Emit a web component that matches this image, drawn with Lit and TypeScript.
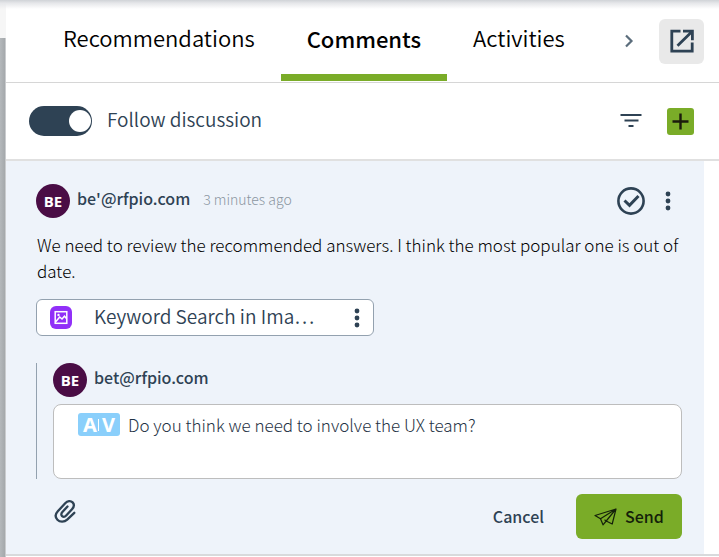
import { LitElement, html, css } from "lit";
import { customElement, property, state } from "lit/decorators.js";
import { classMap } from "lit/directives/class-map.js";

@customElement("user-avatar")
class UserAvatar extends LitElement {
  @property() initials = "";

  static styles = css`
    :host {
      display: flex;
      align-items: center;
      justify-content: center;
      flex: none;
      width: 34px;
      height: 34px;
      border-radius: 50%;
      background: #4a0d45;
      color: #fff;
      font: 700 15px/20px "Open Sans", "Noto Sans", sans-serif;
    }
  `;

  render() {
    return html`${this.initials}`;
  }
}

@customElement("app-root")
class AppRoot extends LitElement {
  @state() private active = "Comments";
  @state() private following = true;

  static styles = css`
    :host {
      --light: 300;
      --book: 350;
      display: flex;
      min-height: 100vh;
      position: relative;
      overflow: hidden;
      background: #fff;
      color: #2e4254;
      font-family: "Noto Sans CJK SC", "Noto Sans", sans-serif;
      font-size: 16px;
      line-height: 26px;
    }
    * {
      box-sizing: border-box;
    }
    button {
      display: flex;
      align-items: center;
      justify-content: center;
      padding: 0;
      border: 0;
      background: none;
      color: inherit;
      font: inherit;
      cursor: pointer;
    }
    svg {
      display: block;
      flex: none;
    }
    .top-shadow {
      position: absolute;
      inset: 0 0 auto 0;
      height: 9px;
      background: linear-gradient(#d0d3d7, #e6e7ea 35%, rgba(255, 255, 255, 0));
    }
    .gutter {
      flex: none;
      width: 6px;
      padding-top: 38px;
      background: #f6f6f6;
      display: flex;
    }
    .gutter::before {
      content: "";
      flex: 1;
      background: linear-gradient(90deg, #b4b8bb, #a6aaad 75%, #dcdddf);
    }
    .panel {
      flex: 1;
      min-width: 0;
    }
    .tabs {
      display: flex;
      align-items: center;
      height: 83px;
      padding: 0 15px 0 31px;
      border-bottom: 1px solid #d6d6d6;
    }
    .tab {
      height: 82px;
      padding: 0 26px 8px;
      color: #000;
      font-size: 22px;
      font-weight: var(--book);
      line-height: 30px;
      white-space: nowrap;
    }
    .tab.active {
      height: 80px;
      padding: 0 26px;
      border-bottom: 7px solid #7aac28;
      font-weight: 500;
    }
    .next {
      margin-left: auto;
      width: 24px;
      height: 30px;
      margin-right: 18px;
    }
    .popout {
      width: 45px;
      height: 45px;
      border-radius: 6px;
      background: #e9e9e9;
      flex: none;
    }
    .toolbar {
      display: flex;
      align-items: center;
      height: 78px;
      padding: 0 25px 0 23px;
      border-bottom: 2px solid #e0e0e0;
    }
    .follow {
      display: flex;
      align-items: center;
      gap: 15px;
      font-size: 19px;
      font-weight: var(--book);
      line-height: 28px;
      cursor: pointer;
    }
    .follow span {
      padding-bottom: 4px;
    }
    .switch {
      appearance: none;
      margin: 0;
      width: 63px;
      height: 30px;
      padding: 4px 1px;
      border-radius: 15px;
      background: #2e4254;
      display: flex;
    }
    .switch::before {
      content: "";
      width: 22px;
      height: 22px;
      border-radius: 50%;
      background: #fff;
    }
    .switch:checked {
      justify-content: flex-end;
    }
    .filter {
      margin-left: auto;
      margin-right: 24px;
    }
    .add {
      width: 27px;
      height: 27px;
      border-radius: 3px;
      background: #7aac28;
      color: #1b1b0c;
    }
    .thread {
      margin-right: 15px;
      padding: 23px 22px 15px 30px;
      background: #eef3fa;
    }
    .end {
      border-top: 2px solid #d8dadc;
    }
    .head {
      display: flex;
      align-items: center;
      gap: 7px;
      height: 34px;
    }
    .name {
      font-weight: 500;
      line-height: 24px;
      padding-bottom: 6px;
    }
    .time {
      margin-left: 6px;
      color: #8b96a1;
      font-size: 14px;
      font-weight: var(--light);
      line-height: 20px;
      padding-bottom: 4px;
    }
    .resolve {
      margin-left: auto;
    }
    .more {
      width: 20px;
      margin-left: 6px;
      margin-right: 4px;
    }
    .message {
      margin: 14px 0 15px;
      padding-left: 1px;
      color: #000;
      font-size: 17px;
      font-weight: var(--light);
    }
    .attachment {
      display: flex;
      align-items: center;
      width: 338px;
      max-width: 100%;
      height: 37px;
      padding: 0 6px 0 13px;
      border: 1px solid #93a1af;
      border-radius: 6px;
      background: #fff;
    }
    .attachment .title {
      flex: 1;
      margin-left: 22px;
      padding-bottom: 4px;
      font-size: 19px;
      font-weight: var(--book);
      line-height: 28px;
      white-space: nowrap;
    }
    .attachment .more {
      margin: 0;
    }
    .reply {
      margin-top: 27px;
      padding-left: 16px;
      border-left: 1px solid #93a1af;
    }
    .editor {
      display: flex;
      align-items: flex-start;
      gap: 8px;
      height: 75px;
      margin-top: 7px;
      padding: 7px 24px;
      border: 1px solid #bdbdbd;
      border-radius: 8px;
      background: #fff;
    }
    .mention {
      display: flex;
      align-items: center;
      justify-content: center;
      gap: 1px;
      flex: none;
      width: 42px;
      height: 23px;
      margin-top: 1px;
      border-radius: 3px;
      background: #8acffb;
      color: #fff;
      font: 700 20px/23px "Noto Sans", sans-serif;
    }
    .mention i {
      width: 1px;
      height: 12px;
      margin-right: 2px;
      background: #fff;
    }
    textarea {
      flex: 1;
      min-width: 0;
      height: 56px;
      padding: 0;
      border: 0;
      outline: 0;
      resize: none;
      background: none;
      color: #1f3345;
      font: inherit;
      font-size: 17px;
      font-weight: var(--light);
    }
    .actions {
      display: flex;
      align-items: center;
      margin-top: 15px;
      padding-left: 18px;
      font-weight: 500;
    }
    .attach {
      padding-bottom: 12px;
    }
    .cancel {
      margin-left: auto;
      margin-right: 32px;
      padding-bottom: 2px;
    }
    .send {
      gap: 8px;
      width: 106px;
      height: 45px;
      border-radius: 6px;
      background: #7aac28;
      color: #14200a;
    }
    .send span {
      padding-bottom: 2px;
    }
  `;

  private dots() {
    return html`<svg width="6" height="20" viewBox="0 0 6 20" fill="currentColor" aria-hidden="true">
      <circle cx="3" cy="3" r="2.4" />
      <circle cx="3" cy="10" r="2.4" />
      <circle cx="3" cy="17" r="2.4" />
    </svg>`;
  }

  private tab(name: string) {
    const on = this.active === name;
    return html`<button
      role="tab"
      aria-selected=${on}
      class=${classMap({ tab: true, active: on })}
      @click=${() => (this.active = name)}
    >${name}</button>`;
  }

  render() {
    return html`
      <div class="gutter"></div>
      <main class="panel">
        <nav class="tabs" role="tablist">
          ${["Recommendations", "Comments", "Activities"].map((n) => this.tab(n))}
          <button class="next" aria-label="More tabs">
            <svg width="10" height="14" viewBox="0 0 10 14" fill="none" stroke="#5b6d7c" stroke-width="2.2">
              <path d="M2 1.5 7.5 7 2 12.5" />
            </svg>
          </button>
          <button class="popout" aria-label="Open in new window">
            <svg width="24" height="24" viewBox="0 0 24 24" fill="none" stroke="currentColor" stroke-width="2.8">
              <path d="M10.500 2.200H1.800v20h20.400V13.500" />
              <path d="M13 2.200h9.400v9M21.800 2.800 7.500 16.700" />
            </svg>
          </button>
        </nav>

        <div class="toolbar">
          <label class="follow">
            <input
              class="switch"
              type="checkbox"
              role="switch"
              .checked=${this.following}
              @change=${(e: Event) => (this.following = (e.target as HTMLInputElement).checked)}
            />
            <span>Follow discussion</span>
          </label>
          <button class="filter" aria-label="Filter">
            <svg width="24" height="16" viewBox="0 0 24 16" fill="currentColor">
              <path d="M1.500 1h21v2h-21zM5.500 6.500h14v2h-14zM9.500 12h5v2h-5z" />
            </svg>
          </button>
          <button class="add" aria-label="Add comment">
            <svg width="17" height="17" viewBox="0 0 17 17" stroke="currentColor" stroke-width="2.400">
              <path d="M8.500 .5v16M.5 8.500h16" />
            </svg>
          </button>
        </div>

        <article class="thread">
          <header class="head">
            <user-avatar initials="BE"></user-avatar>
            <span class="name">be'@rfpio.com</span>
            <span class="time">3 minutes ago</span>
            <button class="resolve" aria-label="Resolve">
              <svg width="28" height="28" viewBox="0 0 28 28" fill="none" stroke="currentColor">
                <circle cx="14" cy="14" r="12.600" stroke-width="2.600" />
                <path d="m7.500 13.500 5 4.800 9-9.300" stroke-width="3" />
              </svg>
            </button>
            <button class="more" aria-label="Comment options">${this.dots()}</button>
          </header>

          <p class="message">
            We need to review the recommended answers. I think the most popular one is out of date.
          </p>

          <div class="attachment">
            <svg width="22" height="23" viewBox="0 0 22 23" fill="none" stroke="#fff">
              <rect width="22" height="23" rx="6" fill="#9130f8" stroke="none" />
              <rect x="5.200" y="5.700" width="11.600" height="11.600" stroke-width="1.500" />
              <path d="m5.500 16 4.200-5 2.300 2 2.500-2.800 2 2.300" stroke-width="1.500" />
              <circle cx="8.500" cy="9" r="1.200" fill="#fff" stroke="none" />
            </svg>
            <span class="title">Keyword Search in Ima…</span>
            <button class="more" aria-label="Attachment options">${this.dots()}</button>
          </div>

          <section class="reply">
            <header class="head">
              <user-avatar initials="BE"></user-avatar>
              <span class="name">bet@rfpio.com</span>
            </header>
            <div class="editor">
              <span class="mention">A<i></i>V</span>
              <textarea aria-label="Reply" .value=${"Do you think we need to involve the UX team?"}></textarea>
            </div>
          </section>

          <div class="actions">
            <button class="attach" aria-label="Attach file">
              <svg width="22" height="24" viewBox="0 0 22 24" fill="none" stroke="currentColor" stroke-width="2.300" stroke-linecap="round">
                <path d="M20.300 13.800 13.200 20.600C10.400 23.200 5.800 23.200 3.400 20.700S1.300 15 3.800 12.300L11.200 4.200C13.500 1.700 16.700 1.400 18.600 3.400S20 8 18 10.200L12.200 16.600C10.900 18 9.300 18.200 8.100 17.100S7.200 14.300 8.400 13L13.500 7.500" />
              </svg>
            </button>
            <button class="cancel">Cancel</button>
            <button class="send">
              <svg width="23" height="18" viewBox="0 0 23 18" fill="none" stroke="currentColor" stroke-width="1.200" stroke-linejoin="round">
                <path d="M22 1 1 7.500l5.500 3.300L22 1 9 16.800l-2.500-6M22 1l-9.800 12 6 3L22 1M9 16.800l3.200-3.800-1.700-1.200" />
              </svg>
              <span>Send</span>
            </button>
          </div>
        </article>
        <div class="end"></div>
      </main>
      <div class="top-shadow"></div>
    `;
  }
}
